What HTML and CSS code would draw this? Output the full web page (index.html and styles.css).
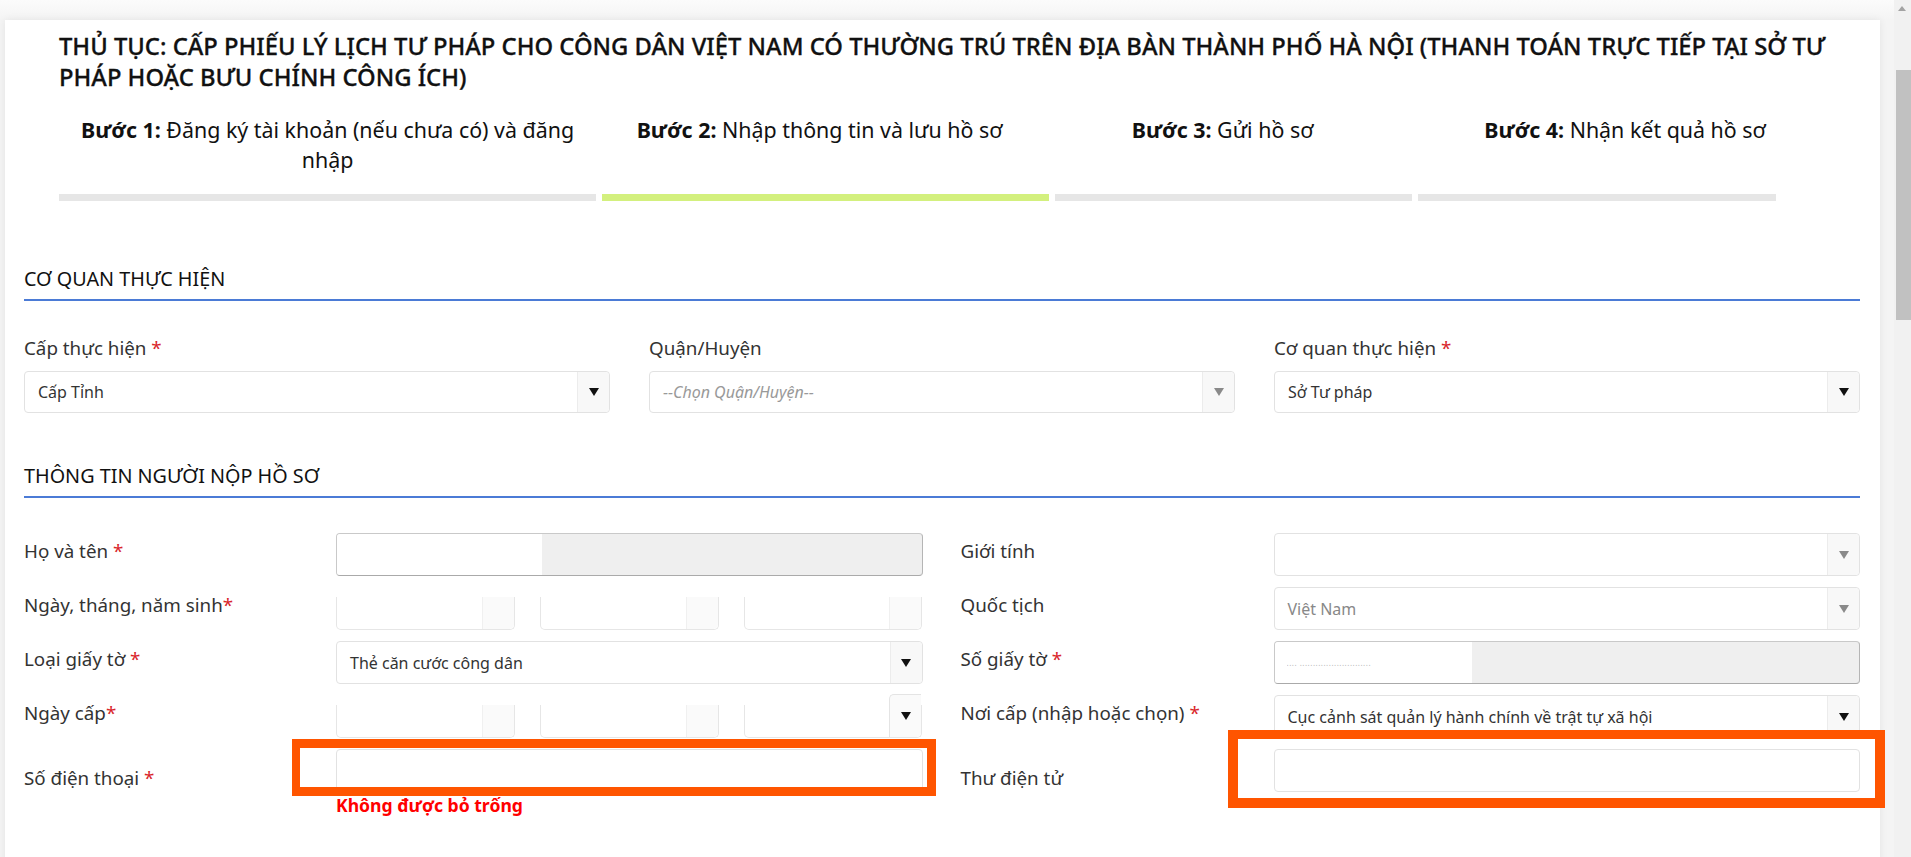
FILE: index.html
```html
<!DOCTYPE html>
<html lang="vi">
<head>
<meta charset="utf-8">
<title>Thủ tục cấp phiếu lý lịch tư pháp</title>
<link rel="stylesheet" href="styles.css">
</head>
<body>
<div class="viewport">
  <main class="page">
    <div class="card">
      <div class="head">
        <h1 class="title">THỦ TỤC: CẤP PHIẾU LÝ LỊCH TƯ PHÁP CHO CÔNG DÂN VIỆT NAM CÓ THƯỜNG TRÚ TRÊN ĐỊA BÀN THÀNH PHỐ HÀ NỘI (THANH TOÁN TRỰC TIẾP TẠI SỞ TƯ PHÁP HOẶC BƯU CHÍNH CÔNG ÍCH)</h1>
        <div class="steps">
          <div class="step step-1">
            <p class="step-text"><b>Bước 1:</b> Đăng ký tài khoản (nếu chưa có) và đăng nhập</p>
            <div class="step-bar"></div>
          </div>
          <div class="step step-2">
            <p class="step-text"><b>Bước 2:</b> Nhập thông tin và lưu hồ sơ</p>
            <div class="step-bar active"></div>
          </div>
          <div class="step step-3">
            <p class="step-text"><b>Bước 3:</b> Gửi hồ sơ</p>
            <div class="step-bar"></div>
          </div>
          <div class="step step-4">
            <p class="step-text"><b>Bước 4:</b> Nhận kết quả hồ sơ</p>
            <div class="step-bar"></div>
          </div>
        </div>
      </div>

      <section class="section section-agency">
        <h2 class="section-title">CƠ QUAN THỰC HIỆN</h2>
        <div class="agency-grid">
          <div class="field">
            <label class="field-label">Cấp thực hiện <span class="req">*</span></label>
            <div class="select"><span class="select-value">Cấp Tỉnh</span><span class="select-btn"><i class="caret"></i></span></div>
          </div>
          <div class="field">
            <label class="field-label">Quận/Huyện</label>
            <div class="select"><span class="select-value placeholder">--Chọn Quận/Huyện--</span><span class="select-btn"><i class="caret muted"></i></span></div>
          </div>
          <div class="field">
            <label class="field-label">Cơ quan thực hiện <span class="req">*</span></label>
            <div class="select"><span class="select-value">Sở Tư pháp</span><span class="select-btn"><i class="caret"></i></span></div>
          </div>
        </div>
      </section>

      <section class="section section-applicant">
        <h2 class="section-title">THÔNG TIN NGƯỜI NỘP HỒ SƠ</h2>
        <div class="form-grid">
          <label class="row-label">Họ và tên <span class="req">*</span></label>
          <div class="masked"><span class="masked-clear"></span></div>
          <label class="row-label right">Giới tính</label>
          <div class="select"><span class="select-value"></span><span class="select-btn"><i class="caret muted"></i></span></div>

          <label class="row-label">Ngày, tháng, năm sinh<span class="req">*</span></label>
          <div class="dates">
            <div class="date-box"><span class="date-btn"></span></div>
            <div class="date-box"><span class="date-btn"></span></div>
            <div class="date-box"><span class="date-btn"></span></div>
          </div>
          <label class="row-label right">Quốc tịch</label>
          <div class="select"><span class="select-value muted-text">Việt Nam</span><span class="select-btn"><i class="caret muted"></i></span></div>

          <label class="row-label">Loại giấy tờ <span class="req">*</span></label>
          <div class="select"><span class="select-value">Thẻ căn cước công dân</span><span class="select-btn"><i class="caret"></i></span></div>
          <label class="row-label right">Số giấy tờ <span class="req">*</span></label>
          <div class="masked"><span class="masked-clear narrow"><span class="masked-dots">.... ...........................</span></span></div>

          <label class="row-label">Ngày cấp<span class="req">*</span></label>
          <div class="dates">
            <div class="date-box"><span class="date-btn"></span></div>
            <div class="date-box"><span class="date-btn"></span></div>
            <div class="date-box open"><span class="date-btn"><i class="caret"></i></span></div>
          </div>
          <label class="row-label right">Nơi cấp (nhập hoặc chọn) <span class="req">*</span></label>
          <div class="select"><span class="select-value">Cục cảnh sát quản lý hành chính về trật tự xã hội</span><span class="select-btn"><i class="caret"></i></span></div>

          <label class="row-label">Số điện thoại <span class="req">*</span></label>
          <div class="input-wrap">
            <div class="input"></div>
            <p class="error">Không được bỏ trống</p>
            <span class="mark mark-phone"></span>
          </div>
          <label class="row-label right">Thư điện tử</label>
          <div class="input-wrap">
            <div class="input"></div>
            <p class="error">&nbsp;</p>
            <span class="mark mark-email"></span>
          </div>
        </div>
        <p class="next-label">Địa chỉ thường trú <span class="req">*</span></p>
      </section>
    </div>
  </main>
  <div class="scrollbar">
    <span class="scroll-arrow"></span>
    <span class="scroll-thumb"></span>
  </div>
</div>
</body>
</html>
```

FILE: styles.css
```css
* { box-sizing: border-box; }

html, body {
  margin: 0;
  padding: 0;
  height: 100%;
  overflow: hidden;
}

body {
  font-family: "Noto Sans", "Open Sans", sans-serif;
  color: #333;
  background: #f6f6f6;
}

.viewport {
  display: flex;
  height: 857px;
  overflow: hidden;
}

.page {
  flex: 1;
  padding: 20px 14px 0 5px;
  background: linear-gradient(#fbfbfb, #f4f4f4 20px);
  overflow: hidden;
}

.card {
  background: #fff;
  box-shadow: 0 0 8px rgba(0, 0, 0, 0.07);
  padding: 11px 20px 40px 19px;
  min-height: 900px;
}

.head {
  margin: 0 0 0 35px;
}

.title {
  margin: 0 20px 0 0;
  font-size: 23.8px;
  line-height: 31px;
  font-weight: 500;
  color: #111;
  -webkit-text-stroke: 0.3px #111;
}

.steps {
  display: grid;
  grid-template-columns: 537fr 447fr 357fr 358fr;
  column-gap: 6px;
  margin: 22px 84px 0 0;
}

.step {
  display: flex;
  flex-direction: column;
}

.step-text {
  margin: 0 0 19px;
  padding: 0 12px;
  text-align: center;
  font-size: 21.4px;
  line-height: 30px;
  color: #111;
}

.step-text b { font-weight: 700; }

.step-2 .step-text { padding: 0 24px 0 12px; }
.step-3 .step-text { padding: 0 40px 0 18px; }
.step-4 .step-text { padding: 0 0 0 56px; }

.step-bar {
  margin-top: auto;
  height: 7px;
  background: #e6e6e6;
}

.step-bar.active { background: #d3f07e; }

.section-title {
  margin: 0;
  font-size: 19.8px;
  line-height: 24px;
  font-weight: 400;
  color: #111;
  padding-bottom: 8px;
  border-bottom: 2px solid #4b7bd6;
}

.section-agency { margin-top: 66px; }
.section-applicant { margin-top: 51px; }

.agency-grid {
  display: grid;
  grid-template-columns: repeat(3, 1fr);
  column-gap: 39px;
  margin-top: 35px;
}

.field-label {
  display: block;
  font-size: 18.8px;
  line-height: 24px;
  color: #333;
  margin-bottom: 11px;
}

.req { color: #d9262b; }

.select {
  display: flex;
  height: 42px;
  border: 1px solid #e2e2e2;
  border-radius: 4px;
  background: #fff;
  overflow: hidden;
}

.form-grid .select { height: 43px; }

.select-value {
  flex: 1;
  display: flex;
  align-items: center;
  padding-left: 13px;
  font-size: 16px;
  color: #333;
  white-space: nowrap;
}

.select-value.placeholder {
  font-style: italic;
  color: #999;
}

.select-value.muted-text { color: #888; }

.select-btn {
  width: 32px;
  display: flex;
  align-items: center;
  justify-content: center;
  background: #f8f8f8;
  border-left: 1px solid #ececec;
  border-radius: 0 4px 4px 0;
}

.caret {
  display: block;
  width: 0;
  height: 0;
  border-left: 5px solid transparent;
  border-right: 5px solid transparent;
  border-top: 8px solid #111;
}

.caret.muted { border-top-color: #8a8a8a; }

.form-grid {
  display: grid;
  grid-template-columns: 312px 1fr 351px 1fr;
  row-gap: 11px;
  align-items: center;
  margin-top: 35px;
}

.row-label {
  font-size: 18.8px;
  line-height: 24px;
  color: #333;
  padding-bottom: 8px;
}

.row-label.right { padding-left: 38px; }

.masked {
  height: 43px;
  border: 1px solid #c9c9c9;
  border-bottom-color: #aaa;
  border-right-color: #b5b5b5;
  border-radius: 4px;
  background: #efefef;
  overflow: hidden;
  display: flex;
}

.masked-clear {
  width: 205px;
  background: #fff;
  display: flex;
  align-items: center;
  padding-left: 12px;
}

.masked-clear.narrow { width: 197px; }

.masked-dots {
  font-size: 8px;
  letter-spacing: 0.5px;
  color: #b8b8b8;
  white-space: nowrap;
  overflow: hidden;
}

.dates {
  display: grid;
  grid-template-columns: repeat(3, 1fr);
  column-gap: 25px;
  height: 43px;
}

.date-box {
  margin-top: 10px;
  display: flex;
  justify-content: flex-end;
  border: 1px solid #e6e6e6;
  border-top: none;
  border-radius: 0 0 5px 5px;
}

.date-btn {
  width: 32px;
  background: #fafafa;
  border-left: 1px solid #f0f0f0;
  border-radius: 0 0 5px 0;
  display: flex;
  align-items: center;
  justify-content: center;
}

.date-box.open .date-btn {
  margin-top: -11px;
  border: 1px solid #e4e4e4;
  border-bottom: none;
  border-right: none;
  border-radius: 5px 0 5px 0;
}

.input-wrap {
  position: relative;
}

.input {
  height: 43px;
  border: 1px solid #e2e2e2;
  border-radius: 4px;
  background: #fff;
}

.error {
  margin: 3px 0 0;
  font-size: 17.6px;
  line-height: 20px;
  font-weight: 700;
  color: #f00;
}

.mark {
  position: absolute;
  border: 9px solid #ff5500;
  pointer-events: none;
}

.mark-phone {
  top: -10px;
  left: -44px;
  right: -13px;
  height: 57px;
  border-width: 9px 9px 9px 8px;
}

.mark-email {
  top: -19px;
  left: -46px;
  right: -25px;
  height: 78px;
  border-width: 9px 10px 10px 10px;
}

.next-label {
  margin: 38px 0 0;
  font-size: 18.8px;
  line-height: 24px;
  color: #333;
}

.scrollbar {
  position: relative;
  width: 17px;
  flex: none;
  background: #f1f1f1;
}

.scroll-arrow {
  position: absolute;
  top: 6px;
  left: 4px;
  width: 0;
  height: 0;
  border-left: 4px solid transparent;
  border-right: 4px solid transparent;
  border-bottom: 5px solid #a3a3a3;
}

.scroll-thumb {
  position: absolute;
  top: 70px;
  left: 2px;
  right: 0;
  height: 250px;
  background: #c1c1c1;
}
```
